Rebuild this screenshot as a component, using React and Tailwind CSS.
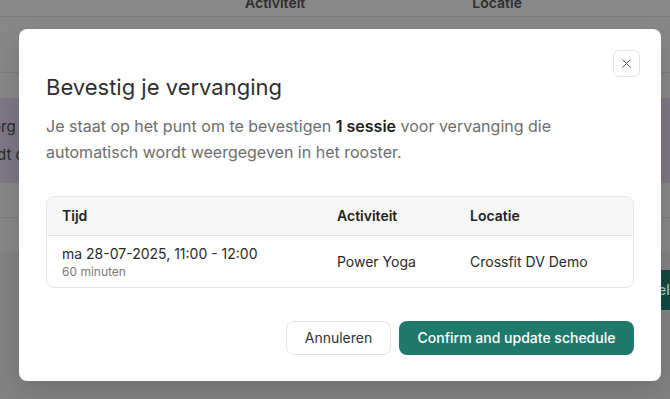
import { X } from 'lucide-react';

const font = { fontFamily: 'Inter, "Noto Sans", sans-serif' };

function Backdrop() {
  return (
    <div className="flex h-full flex-col bg-[#888888] text-[#2e2e2e]">
      <div className="flex h-[17px] items-end border-b border-[#7c7c7c] text-sm font-semibold leading-none">
        <span className="ml-[245px] translate-y-[-6px]">Activiteit</span>
        <span className="ml-[167px] translate-y-[-6px]">Locatie</span>
      </div>
      <div className="h-[56px] border-b border-[#7c7c7c]" />
      <div className="mt-[25px] flex h-[85px] flex-col justify-center gap-[8px] bg-[#7e7886] text-[15px] leading-5 text-[#2a2a2a]">
        <span className="-ml-[8px]">org</span>
        <span className="-ml-[3px]">dt d</span>
      </div>
      <div className="h-[35px] border-b border-[#7c7c7c]" />
      <div className="h-[34px]" />
      <div className="flex flex-1 justify-end bg-[#838383] pt-[18px]">
        <div className="flex h-[40px] w-[15px] items-center overflow-hidden rounded-l bg-[#134a40] pl-[3px] text-sm font-medium text-[#a9c6bf]">
          el
        </div>
      </div>
    </div>
  );
}

export default function App() {
  return (
    <div className="relative h-[399px] w-[670px] overflow-hidden" style={font}>
      <Backdrop />
      <div className="absolute left-[19px] top-[29px] flex h-[352px] w-[642px] flex-col rounded-lg bg-white px-[27px] shadow-[0_10px_30px_rgba(0,0,0,0.15)]">
        <div className="flex justify-end pt-[21px]">
          <button
            type="button"
            className="mr-[-6px] flex h-[27px] w-[27px] items-center justify-center rounded-md border border-[#e4e4e4] text-[#555]"
            aria-label="Close"
          >
            <X size={15} strokeWidth={1.6} />
          </button>
        </div>
        <h2 className="mt-[-4px] text-[22px] font-normal leading-7 text-[#2f2f2f]">
          Bevestig je vervanging
        </h2>
        <p className="mt-[12px] text-[16px] leading-[26px] text-[#6d6d6d]">
          Je staat op het punt om te bevestigen <span className="font-semibold text-[#1f1f1f]">1 sessie</span> voor vervanging die
          <br />
          automatisch wordt weergegeven in het rooster.
        </p>
        <div className="mt-[31px] overflow-hidden rounded-lg border border-[#e6e6e6]">
          <div className="flex h-[39px] items-center border-b border-[#e3e3e3] bg-[#f7f7f7] px-[15px] text-sm font-semibold text-[#222]">
            <span className="w-[275px]">Tijd</span>
            <span className="w-[133px]">Activiteit</span>
            <span>Locatie</span>
          </div>
          <div className="flex h-[51px] items-center px-[15px] text-sm text-[#2a2a2a]">
            <div className="flex w-[275px] flex-col">
              <span className="leading-5">ma 28-07-2025, 11:00 - 12:00</span>
              <span className="text-xs leading-4 text-[#7a7a7a]">60 minuten</span>
            </div>
            <span className="w-[133px]">Power Yoga</span>
            <span>Crossfit DV Demo</span>
          </div>
        </div>
        <div className="mt-[33px] flex justify-end gap-[8px]">
          <button
            type="button"
            className="h-[34px] w-[105px] rounded-lg border border-[#e2e2e2] bg-white text-sm text-[#333]"
          >
            Annuleren
          </button>
          <button
            type="button"
            className="h-[34px] w-[235px] rounded-lg bg-[#1f7a6b] text-sm font-medium text-white"
          >
            Confirm and update schedule
          </button>
        </div>
      </div>
    </div>
  );
}
